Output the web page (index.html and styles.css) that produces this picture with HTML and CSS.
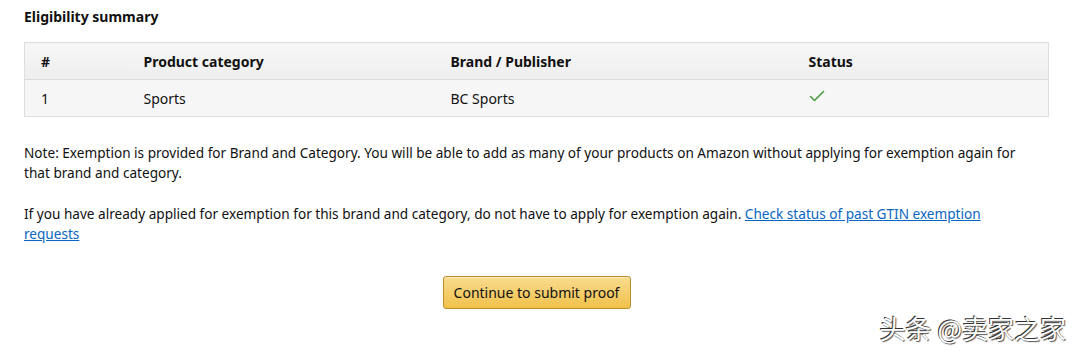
FILE: index.html
```html
<!DOCTYPE html>
<html lang="en">
<head>
  <meta charset="UTF-8">
  <title>Eligibility summary</title>
  <link rel="stylesheet" href="styles.css">
</head>
<body>
  <h3 class="section-title">Eligibility summary</h3>

  <table class="summary-table">
    <colgroup>
      <col class="col-num">
      <col class="col-category">
      <col class="col-brand">
      <col class="col-status">
    </colgroup>
    <thead>
      <tr>
        <th>#</th>
        <th>Product category</th>
        <th>Brand / Publisher</th>
        <th>Status</th>
      </tr>
    </thead>
    <tbody>
      <tr>
        <td>1</td>
        <td>Sports</td>
        <td>BC Sports</td>
        <td>
          <svg class="check" width="16" height="12" viewBox="0 0 16 12">
            <path d="M1.5 6.5 L5.5 10.5 L14.5 1.5" fill="none" stroke="#4a9e3f" stroke-width="1.6" stroke-linecap="round" stroke-linejoin="round"/>
          </svg>
        </td>
      </tr>
    </tbody>
  </table>

  <p class="note">
    Note: Exemption is provided for Brand and Category. You will be able to add as many of your products on Amazon without applying for exemption again for that brand and category.
  </p>

  <p class="note">
    If you have already applied for exemption for this brand and category, do not have to apply for exemption again.
    <a href="#">Check status of past GTIN exemption requests</a>
  </p>

  <div class="actions">
    <button class="primary-btn">Continue to submit proof</button>
  </div>

  <div class="watermark">头条 @卖家之家</div>
</body>
</html>
```

FILE: styles.css
```css
body {
  font-family: 'Noto Sans', 'Open Sans', sans-serif;
  margin: 0;
  padding: 8px 31px 0 24px;
  color: #111;
  background: #fff;
  font-size: 13.6px;
}

.section-title {
  font-size: 14px;
  font-weight: bold;
  margin: 0 0 16px 0;
  line-height: 18px;
}

.summary-table {
  width: 100%;
  border-collapse: collapse;
  border: 1px solid #dedede;
  table-layout: fixed;
}

.col-num { width: 103px; }
.col-category { width: 307px; }
.col-brand { width: 358px; }

.summary-table th,
.summary-table td {
  text-align: left;
  padding: 0 16px;
  height: 36px;
  font-size: 14px;
}

.summary-table th {
  font-weight: bold;
  background: linear-gradient(#f7f7f7, #eeeeee);
  border-bottom: 1px solid #dcdcdc;
}

.summary-table td {
  background: #f6f6f6;
}

.check {
  display: block;
  margin-top: -4px;
}

.note {
  max-width: 1001px;
  margin: 26px 0 0 0;
  line-height: 20px;
  font-size: 13.6px;
}

.note + .note {
  margin-top: 21px;
}

.note a {
  color: #0a66c2;
  text-decoration: underline;
}

.actions {
  display: flex;
  justify-content: center;
  margin-top: 32px;
}

.primary-btn {
  font-family: inherit;
  font-size: 14px;
  color: #111;
  width: 188px;
  height: 33px;
  border: 1px solid #b98e2c;
  border-radius: 3px;
  background: linear-gradient(#f9dc8f, #f0c14b);
  box-shadow: 0 1px 0 rgba(255,255,255,0.4) inset;
  cursor: pointer;
}

.watermark {
  position: absolute;
  right: 14px;
  bottom: 10px;
  font-family: 'Noto Sans CJK SC', sans-serif;
  font-size: 26px;
  line-height: 32px;
  color: #fff;
  text-shadow: -1px -1px 0 #333, 1px 1px 1px #555;
}
```
